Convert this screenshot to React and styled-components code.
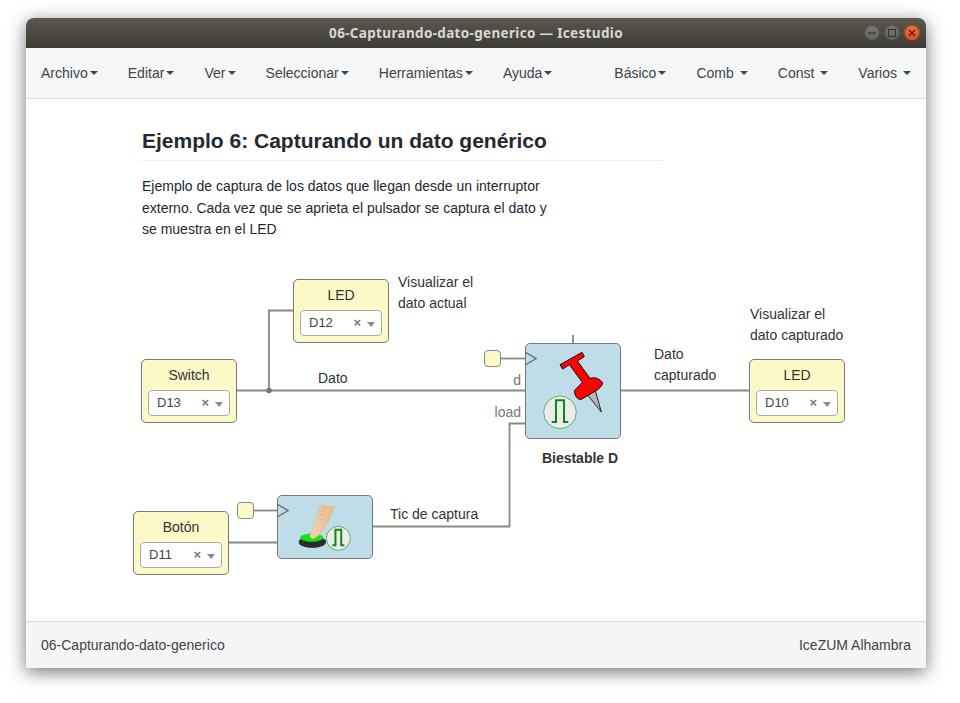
import React from "react";
import styled, { createGlobalStyle } from "styled-components";

const ORIGIN_X = 26;
const ORIGIN_Y = 250;

const Global = createGlobalStyle`
  html, body {
    margin: 0;
    padding: 0;
    background: #fff;
    font-family: "Liberation Sans", Arial, sans-serif;
    font-size: 14px;
    color: #333;
  }
`;

const Desktop = styled.div`
  width: 960px;
  height: 703px;
  padding: 18px 34px 35px 26px;
  box-sizing: border-box;
  overflow: hidden;
`;

const Window = styled.div`
  height: 650px;
  display: flex;
  flex-direction: column;
  background: #fff;
  border-radius: 8px 8px 0 0;
  box-shadow: 0 4px 18px rgba(0, 0, 0, 0.55);
`;

const TitleBar = styled.div`
  height: 30px;
  flex: none;
  position: relative;
  display: flex;
  align-items: center;
  justify-content: center;
  border-radius: 8px 8px 0 0;
  background: linear-gradient(#5c584e, #3d3b35);
  color: #d9d8d2;
  font-family: "Noto Sans", sans-serif;
  font-weight: 700;
  font-size: 13.5px;
  letter-spacing: 0.33px;
`;

const WindowButtons = styled.div`
  position: absolute;
  right: 6px;
  top: 7px;
  display: flex;
  gap: 4px;
`;

const WindowButton = styled.div`
  width: 16px;
  height: 16px;
  border-radius: 50%;
  display: flex;
  align-items: center;
  justify-content: center;
  box-shadow: inset 0 0 0 1px rgba(0, 0, 0, 0.3);
  background: ${p => (p.$close ? "linear-gradient(#f0703c, #df4f1c)" : "linear-gradient(#7b7a75, #5f5e59)")};
`;

const MenuBar = styled.nav`
  height: 51px;
  flex: none;
  box-sizing: border-box;
  display: flex;
  justify-content: space-between;
  background: #f5f6f8;
  border-bottom: 1px solid #d5dee0;
`;

const MenuGroup = styled.div`
  display: flex;
`;

const MenuItem = styled.div`
  padding: 0 15px;
  display: flex;
  align-items: center;
  color: #444;
  white-space: pre;
  line-height: 50px;
`;

const Caret = styled.span`
  width: 0;
  height: 0;
  margin-left: 2.1px;
  border-top: 4px solid #444;
  border-left: 4px solid transparent;
  border-right: 4px solid transparent;
`;

const Main = styled.main`
  flex: 1;
  display: flex;
  flex-direction: column;
`;

const Note = styled.section`
  height: 151px;
  flex: none;
  box-sizing: border-box;
  padding: 29px 0 0 116px;
`;

const Heading = styled.h2`
  width: 520px;
  margin: 0 0 15px;
  padding-bottom: 7px;
  font-size: 21px;
  line-height: 25px;
  font-weight: 700;
  color: #24292e;
  border-bottom: 1px solid #eaecef;
`;

const NoteText = styled.p`
  width: 412px;
  margin: 0;
  line-height: 21.5px;
  color: #24292e;
`;

const Canvas = styled.div`
  flex: 1;
  position: relative;
`;

const Wires = styled.svg`
  position: absolute;
  left: 0;
  top: 0;
  pointer-events: none;
`;

const PinBlock = styled.div`
  position: absolute;
  left: ${p => p.$x - ORIGIN_X}px;
  top: ${p => p.$y - ORIGIN_Y}px;
  width: 96px;
  height: 64px;
  box-sizing: border-box;
  background: #fbf9c8;
  border: 1px solid #777;
  border-radius: 5px;
  padding: 0 6px;
  display: flex;
  flex-direction: column;
  align-items: center;
`;

const PinName = styled.div`
  height: 30px;
  line-height: 30px;
  color: #333;
`;

const Select = styled.div`
  width: 82px;
  height: 26px;
  flex: none;
  box-sizing: border-box;
  padding: 0 6px 2px 8px;
  display: flex;
  align-items: center;
  background: #fff;
  border: 1px solid #aaa;
  border-radius: 4px;
  font-size: 13px;
  color: #444;
`;

const SelectValue = styled.span`
  flex: 1;
`;

const Clear = styled.span`
  font-weight: 700;
  font-size: 13px;
  color: #777;
  margin-right: 6px;
`;

const SelectArrow = styled.span`
  width: 0;
  height: 0;
  margin-top: 4px;
  border-top: 5px solid #888;
  border-left: 4px solid transparent;
  border-right: 4px solid transparent;
`;

const LogicBlock = styled.div`
  position: absolute;
  left: ${p => p.$x - ORIGIN_X}px;
  top: ${p => p.$y - ORIGIN_Y}px;
  width: 96px;
  height: ${p => p.$h}px;
  box-sizing: border-box;
  background: #bfdce9;
  border: 1px solid #777;
  border-radius: 5px;
`;

const BlockIcon = styled.svg`
  position: absolute;
  left: ${p => p.$x}px;
  top: ${p => p.$y}px;
`;

const ClockInput = styled.div`
  position: absolute;
  left: ${p => p.$x - ORIGIN_X}px;
  top: ${p => p.$y - ORIGIN_Y}px;
  width: 17px;
  height: 17px;
  box-sizing: border-box;
  background: #fbf9c8;
  border: 1px solid #888;
  border-radius: 4px;
`;

const Label = styled.div`
  position: absolute;
  left: ${p => p.$x - ORIGIN_X}px;
  top: ${p => p.$y - ORIGIN_Y}px;
  line-height: 21px;
  white-space: nowrap;
  color: #333;
`;

const PortLabel = styled.div`
  position: absolute;
  right: ${926 - 521}px;
  top: ${p => p.$y - ORIGIN_Y}px;
  line-height: 20px;
  color: #777;
`;

const BlockName = styled.div`
  position: absolute;
  left: ${525 - ORIGIN_X}px;
  top: ${448 - ORIGIN_Y}px;
  width: 110px;
  line-height: 20px;
  text-align: center;
  font-weight: 700;
  color: #333;
`;

const Footer = styled.footer`
  height: 47px;
  flex: none;
  box-sizing: border-box;
  padding: 0 15px;
  display: flex;
  align-items: center;
  justify-content: space-between;
  background: #f4f5f7;
  border-top: 1px solid #d8d8d8;
  color: #444;
`;

const Pulse = ({ cx, cy, r, scale = 1 }) => (
  <g>
    <circle cx={cx} cy={cy} r={r} fill="#ececec" stroke="#5cb05c" strokeWidth="3" />
    <path
      d={`M${cx - 25 * scale} ${cy + 29 * scale}H${cx - 12 * scale}V${cy - 36 * scale}H${cx + 12 * scale}V${cy + 29 * scale}H${cx + 25 * scale}`}
      fill="none"
      stroke="#0b8a12"
      strokeWidth="6"
    />
  </g>
);

const PinIcon = () => (
  <BlockIcon $x={14} $y={4} width="70" height="85" viewBox="0 0 210 255">
    <path d="M142 140L165 125L184 192Z" fill="#b9b9b9" stroke="#222" strokeWidth="3" strokeLinejoin="round" />
    <path
      d="M60 50L126 13L133 26L112 39L150 91Q172 84 188 104Q186 118 165 130L122 155Q105 152 103 128L127 103L88 50L68 63Z"
      fill="#f00"
      stroke="#111"
      strokeWidth="3"
      strokeLinejoin="round"
    />
    <Pulse cx={60} cy={193} r={49} />
  </BlockIcon>
);

const ButtonIcon = () => (
  <BlockIcon $x={17} $y={4} width="60" height="55" viewBox="0 0 180 165">
    <defs>
      <linearGradient id="finger" x1="0" y1="0" x2="1" y2="0">
        <stop offset="0" stopColor="#f3d3b3" />
        <stop offset="1" stopColor="#e6b88c" />
      </linearGradient>
    </defs>
    <ellipse cx="52" cy="126" rx="41" ry="18" fill="#2c2c2c" />
    <ellipse cx="50" cy="113" rx="35" ry="12" fill="#0be60b" />
    <path d="M76 15L118 20L102 62L74 104L54 118L44 110L60 70Z" fill="url(#finger)" stroke="#d8b18b" strokeWidth="1.5" />
    <path d="M82 24H90M80 34H86M76 44H84" stroke="#c4a07c" strokeWidth="2" fill="none" />
    <Pulse cx={130} cy={115} r={36} scale={0.72} />
  </BlockIcon>
);

const Pin = ({ x, y, name, value }) => (
  <PinBlock $x={x} $y={y}>
    <PinName>{name}</PinName>
    <Select>
      <SelectValue>{value}</SelectValue>
      <Clear>×</Clear>
      <SelectArrow />
    </Select>
  </PinBlock>
);

const menuLeft = ["Archivo", "Editar", "Ver", "Seleccionar", "Herramientas", "Ayuda"];
const menuRight = ["Básico", "Comb ", "Const ", "Varios "];

const App = () => (
  <>
    <Global />
    <Desktop>
      <Window>
        <TitleBar>
          06-Capturando-dato-generico — Icestudio
          <WindowButtons>
            <WindowButton>
              <svg width="10" height="10" viewBox="0 0 10 10">
                <path d="M1 5H9" stroke="#333" strokeWidth="1.3" />
              </svg>
            </WindowButton>
            <WindowButton>
              <svg width="10" height="10" viewBox="0 0 10 10">
                <rect x="1.5" y="1.5" width="7" height="7" fill="none" stroke="#333" strokeWidth="1.1" />
              </svg>
            </WindowButton>
            <WindowButton $close>
              <svg width="10" height="10" viewBox="0 0 10 10">
                <path d="M2 2L8 8M8 2L2 8" stroke="#4a2010" strokeWidth="1.2" />
              </svg>
            </WindowButton>
          </WindowButtons>
        </TitleBar>
        <MenuBar>
          <MenuGroup>
            {menuLeft.map(item => (
              <MenuItem key={item}>
                {item}
                <Caret />
              </MenuItem>
            ))}
          </MenuGroup>
          <MenuGroup>
            {menuRight.map(item => (
              <MenuItem key={item}>
                {item}
                <Caret />
              </MenuItem>
            ))}
          </MenuGroup>
        </MenuBar>
        <Main>
          <Note>
            <Heading>Ejemplo 6: Capturando un dato genérico</Heading>
            <NoteText>
              Ejemplo de captura de los datos que llegan desde un interruptor externo. Cada vez que se aprieta el
              pulsador se captura el dato y se muestra en el LED
            </NoteText>
          </Note>
          <Canvas>
            <Pin x={293} y={279} name="LED" value="D12" />
            <Pin x={141} y={359} name="Switch" value="D13" />
            <Pin x={133} y={511} name="Botón" value="D11" />
            <Pin x={749} y={359} name="LED" value="D10" />

            <LogicBlock $x={525} $y={343} $h={96}>
              <PinIcon />
            </LogicBlock>
            <LogicBlock $x={277} $y={495} $h={64}>
              <ButtonIcon />
            </LogicBlock>

            <ClockInput $x={484} $y={350} />
            <ClockInput $x={237} $y={502} />

            <Wires width="900" height="371" viewBox={`${ORIGIN_X} ${ORIGIN_Y} 900 371`}>
              <g fill="none" stroke="#888" strokeWidth="1.8">
                <path d="M237 390.5H525" />
                <path d="M269 390.5V310.5H293" />
                <path d="M621 390.5H749" />
                <path d="M501 358.5H525" />
                <path d="M253 510.5H277" />
                <path d="M229 542.5H277" />
                <path d="M525 423.5H509.5V526.5H373" />
                <path d="M573 335V343" />
              </g>
              <circle cx="269" cy="390.5" r="2.8" fill="#777" />
              <path d="M525 352L536 358.5L525 365" fill="none" stroke="#666" strokeWidth="1.4" />
              <path d="M277 504L288 510.5L277 517" fill="none" stroke="#666" strokeWidth="1.4" />
            </Wires>

            <Label $x={398} $y={272}>
              Visualizar el
              <br />
              dato actual
            </Label>
            <Label $x={750} $y={304}>
              Visualizar el
              <br />
              dato capturado
            </Label>
            <Label $x={654} $y={344}>
              Dato
              <br />
              capturado
            </Label>
            <Label $x={318} $y={368}>
              Dato
            </Label>
            <Label $x={390} $y={504}>
              Tic de captura
            </Label>
            <PortLabel $y={370}>d</PortLabel>
            <PortLabel $y={402}>load</PortLabel>
            <BlockName>Biestable D</BlockName>
          </Canvas>
        </Main>
        <Footer>
          <span>06-Capturando-dato-generico</span>
          <span>IceZUM Alhambra</span>
        </Footer>
      </Window>
    </Desktop>
  </>
);

export default App;
